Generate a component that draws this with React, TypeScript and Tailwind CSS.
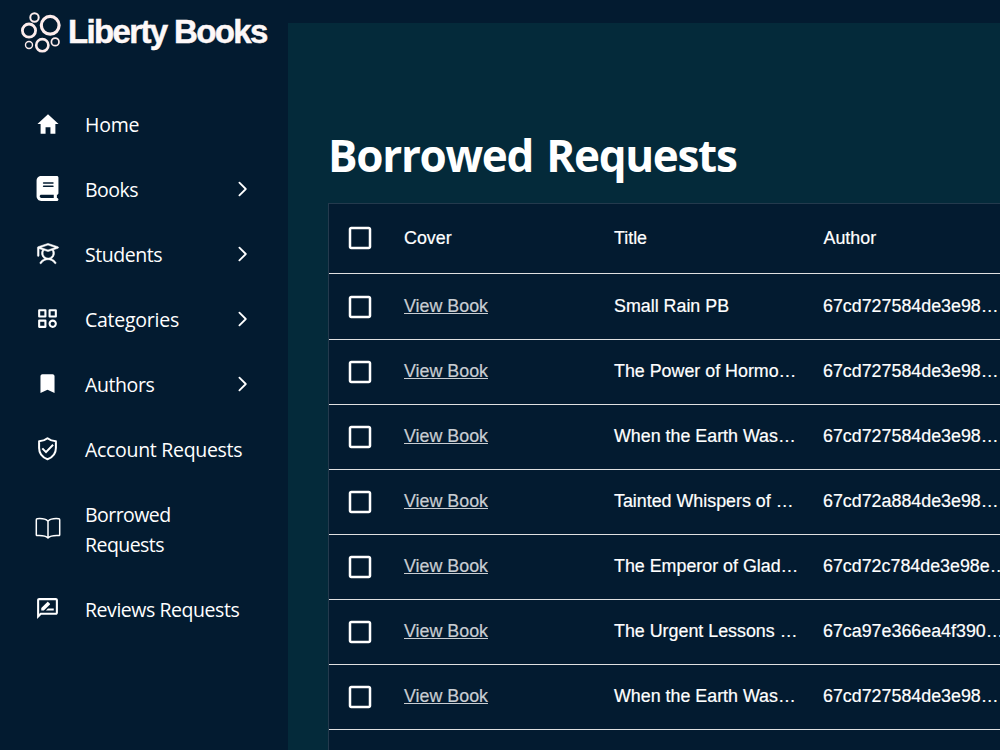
import { BiCategory } from "react-icons/bi";
import { FaBook } from "react-icons/fa6";
import { IoMdBookmark, IoMdHome } from "react-icons/io";
import { MdOutlineRateReview } from "react-icons/md";
import { PiStudent } from "react-icons/pi";
import clsx from "clsx";

const OpenBook = ({ size = 26 }: { size?: number }) => (
  <svg width={size} height={size} viewBox="0 0 26 26" fill="none" stroke="currentColor" strokeWidth="1.5" strokeLinejoin="round" className="shrink-0">
    <path d="M13 5.2C10.8 3 6.5 2.3 2.2 2.7Q1.3 2.8 1.3 3.8V18.7Q1.3 19.7 2.3 19.6C6.5 19.4 10.8 19.7 13 22C15.2 19.7 19.5 19.4 23.7 19.6Q24.7 19.7 24.7 18.7V3.8Q24.7 2.8 23.8 2.7C19.5 2.3 15.2 3 13 5.2V21.8" />
  </svg>
);

const ShieldCheck = ({ size = 25 }: { size?: number }) => (
  <svg width={size} height={size} viewBox="0 0 25 25" fill="none" stroke="currentColor" strokeWidth="2" className="shrink-0">
    <path d="M12.5 2.2C10.3 4 7.4 5 4.1 5.2V12C4.1 17.3 7.5 21.4 12.5 23.2C17.5 21.4 20.9 17.3 20.9 12V5.2C17.6 5 14.7 4 12.5 2.2Z" strokeLinejoin="round" />
    <path d="M7.3 12.4L11 16.1L18.1 8.7" />
  </svg>
);

const Chevron = () => (
  <svg width="10" height="16" viewBox="0 0 10 16" fill="none" stroke="currentColor" strokeWidth="1.8" className="mb-[3px] shrink-0">
    <path d="M1.4 1.6L7.8 8L1.4 14.4" strokeLinecap="round" strokeLinejoin="round" />
  </svg>
);

const links = [
  { label: "Home", Icon: IoMdHome, size: 26, expandable: false, tracking: "tracking-[-0.2px]" },
  { label: "Books", Icon: FaBook, size: 25, expandable: true, tracking: "tracking-[-0.5px]" },
  { label: "Students", Icon: PiStudent, size: 26, expandable: true, tracking: "tracking-[-0.45px]" },
  { label: "Categories", Icon: BiCategory, size: 25, expandable: true, tracking: "tracking-[-0.25px]" },
  { label: "Authors", Icon: IoMdBookmark, size: 25, expandable: true, tracking: "tracking-[-0.4px]" },
  { label: "Account Requests", Icon: ShieldCheck, size: 25, expandable: false, tracking: "tracking-[-0.3px]" },
  { label: "Borrowed Requests", Icon: OpenBook, size: 26, expandable: false, tracking: "tracking-[-0.55px]" },
  { label: "Reviews Requests", Icon: MdOutlineRateReview, size: 25, expandable: false, tracking: "tracking-[-0.45px]" },
];

const rows = [
  { title: "Small Rain PB", author: "67cd727584de3e98…" },
  { title: "The Power of Hormo…", author: "67cd727584de3e98…" },
  { title: "When the Earth Was…", author: "67cd727584de3e98…" },
  { title: "Tainted Whispers of …", author: "67cd72a884de3e98…" },
  { title: "The Emperor of Glad…", author: "67cd72c784de3e98e…" },
  { title: "The Urgent Lessons …", author: "67ca97e366ea4f390…" },
  { title: "When the Earth Was…", author: "67cd727584de3e98…" },
];

const Logo = () => (
  <div className="flex h-[65px] items-start pl-5 pt-2.5">
    <svg width="42" height="44" viewBox="0 0 42 44" fill="none" stroke="#fdecec" className="shrink-0">
      <circle cx="14.5" cy="7.5" r="4.2" strokeWidth="2" />
      <circle cx="30.2" cy="15.3" r="8.9" strokeWidth="3.2" />
      <circle cx="9" cy="20.6" r="6.6" strokeWidth="2.8" />
      <circle cx="22.3" cy="35.2" r="6.1" strokeWidth="2.6" />
      <circle cx="35.2" cy="31.9" r="3.8" strokeWidth="1.7" />
      <circle cx="9" cy="35" r="3.5" strokeWidth="1.4" />
    </svg>
    <p className="ml-1.5 mt-0.5 whitespace-nowrap font-['Liberation_Sans'] text-[33px] leading-[40px] font-bold tracking-[-1.65px] text-[#fdf8f8] [-webkit-text-stroke:0.5px]">
      Liberty Books
    </p>
  </div>
);

const Sidebar = () => (
  <aside className="h-full w-72 shrink-0 bg-[#031b30]">
    <Logo />
    <nav className="pt-[30px]">
      {links.map(({ label, Icon, size, expandable, tracking }) => (
        <div key={label} className="mb-[5px] flex min-h-[60px] items-center px-[35px] py-[15px] leading-[30px]">
          <div className="flex w-[25px] shrink-0 justify-center pb-[3px]">
            <Icon size={size} className={clsx("shrink-0", Icon === PiStudent && "stroke-[5]")} />
          </div>
          <span
            className={clsx(
              "ml-[25px] shrink-0 text-[19.5px]",
              expandable ? "w-[153px]" : "w-[168px]",
              tracking,
            )}
          >
            {label}
          </span>
          {expandable && <Chevron />}
        </div>
      ))}
    </nav>
  </aside>
);

const Checkbox = () => (
  <div className="flex w-[75px] shrink-0 pl-4">
    <svg width="30" height="30" viewBox="0 0 24 24" fill="currentColor">
      <path d="M19 5v14H5V5h14m0-2H5c-1.1 0-2 .9-2 2v14c0 1.1.9 2 2 2h14c1.1 0 2-.9 2-2V5c0-1.1-.9-2-2-2z" />
    </svg>
  </div>
);

const RequestsTable = () => (
  <div className="h-[600px] w-[900px] border border-[#243a4d] bg-[#031b30] font-['Liberation_Sans'] text-[17.85px] [-webkit-text-stroke:0.2px]">
    <div className="flex h-[70px] items-center border-b border-[#e0e0e0] pb-px">
      <Checkbox />
      <span className="w-[210px] shrink-0">Cover</span>
      <span className="w-[209.5px] shrink-0">Title</span>
      <span>Author</span>
    </div>
    {rows.map((row, index) => (
      <div
        key={index}
        className={clsx("flex items-center border-b border-[#e0e0e0]", index === 0 ? "h-[66px] pt-px" : "h-[65px]")}
      >
        <Checkbox />
        <span className="w-[210px] shrink-0 pb-0.5 text-[#c9cdd2] underline">View Book</span>
        <span className="w-[209px] shrink-0 whitespace-nowrap pb-0.5">{row.title}</span>
        <span className="whitespace-nowrap pb-0.5">{row.author}</span>
      </div>
    ))}
  </div>
);

const App = () => {
  return (
    <div className="flex h-[750px] w-[1000px] overflow-hidden bg-[#031b30] font-['Open_Sans',sans-serif] text-white">
      <Sidebar />
      <main className="mt-[23px] min-w-0 flex-1 bg-[#042a3a] pl-10 pt-[102px]">
        <h1 className="mb-[18px] text-[44px] leading-[60px] font-bold tracking-[-1.3px] [word-spacing:3px]">Borrowed Requests</h1>
        <RequestsTable />
      </main>
    </div>
  );
};

export default App;
